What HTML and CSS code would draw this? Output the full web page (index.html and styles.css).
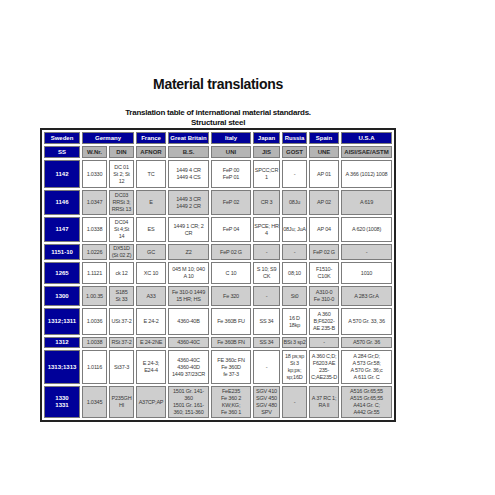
FILE: index.html
```html
<!DOCTYPE html>
<html>
<head>
<meta charset="utf-8">
<link rel="stylesheet" href="styles.css">
</head>
<body>
<div class="page">
  <h1 class="title">Material translations</h1>
  <p class="subtitle">Translation table of international material standards.<br>Structural steel</p>
  <table class="mat">
    <colgroup>
      <col class="c-se"><col class="c-wnr"><col class="c-din"><col class="c-fr"><col class="c-gb">
      <col class="c-it"><col class="c-jp"><col class="c-ru"><col class="c-es"><col class="c-us">
    </colgroup>
    <tr class="h1">
      <th>Sweden</th><th colspan="2">Germany</th><th>France</th><th>Great Britain</th><th>Italy</th><th>Japan</th><th>Russia</th><th>Spain</th><th>U.S.A</th>
    </tr>
    <tr class="h2">
      <th class="se">SS</th><th>W.Nr.</th><th>DIN</th><th>AFNOR</th><th>B.S.</th><th>UNI</th><th>JIS</th><th>GOST</th><th>UNE</th><th>AISI/SAE/ASTM</th>
    </tr>
    <tr class="w r1142">
      <th class="se">1142</th><td>1.0330</td><td>DC 01<br>St 2; St<br>12</td><td>TC</td><td>1449 4 CR<br>1449 4 CS</td><td>FeP 00<br>FeP 01</td><td>SPCC;CR<br>1</td><td>-</td><td>AP 01</td><td>A 366 (1012) 1008</td>
    </tr>
    <tr class="g r1146">
      <th class="se">1146</th><td>1.0347</td><td>DC03<br>RRSt 3;<br>RRSt 13</td><td>E</td><td>1449 3 CR<br>1449 2 CR</td><td>FeP 02</td><td>CR 3</td><td>08Ju</td><td>AP 02</td><td>A 619</td>
    </tr>
    <tr class="w r1147">
      <th class="se">1147</th><td>1.0338</td><td>DC04<br>St 4;St<br>14</td><td>ES</td><td>1449 1 CR; 2<br>CR</td><td>FeP 04</td><td>SPCE; HR<br>4</td><td>08Ju; JuA</td><td>AP 04</td><td>A 620 (1008)</td>
    </tr>
    <tr class="g r1151">
      <th class="se">1151-10</th><td>1.0226</td><td>DX51D<br>(St 02 Z)</td><td>GC</td><td>Z2</td><td>FeP 02 G</td><td>-</td><td>-</td><td>FeP 02 G</td><td>-</td>
    </tr>
    <tr class="w r1265">
      <th class="se">1265</th><td>1.1121</td><td>ck 12</td><td>XC 10</td><td>045 M 10; 040<br>A 10</td><td>C 10</td><td>S 10; S9<br>CK</td><td>08;10</td><td>F1510-<br>C10K</td><td>1010</td>
    </tr>
    <tr class="g r1300">
      <th class="se">1300</th><td>1.00.35</td><td>S185<br>St 33</td><td>A33</td><td>Fe 310-0 1449<br>15 HR; HS</td><td>Fe 320</td><td>-</td><td>St0</td><td>A310-0<br>Fe 310-0</td><td>A 283 Gr.A</td>
    </tr>
    <tr class="w r1311">
      <th class="se">1312;1311</th><td>1.0036</td><td>USt 37-2</td><td>E 24-2</td><td>4360-40B</td><td>Fe 360B FU</td><td>SS 34</td><td>16 D<br>18kp</td><td>A 360<br>B;F6202-<br>AE 235-B</td><td>A 570 Gr. 33, 36</td>
    </tr>
    <tr class="g r1312">
      <th class="se">1312</th><td>1.0038</td><td>RSt 37-2</td><td>E 24-2NE</td><td>4360-40C</td><td>Fe 360B FN</td><td>SS 34</td><td>BSt 3 sp2</td><td>-</td><td>A570 Gr. 36</td>
    </tr>
    <tr class="w r1313">
      <th class="se">1313;1313</th><td>1.0116</td><td>St37-3</td><td>E 24-3;<br>E24-4</td><td>4360-40C<br>4360-40D<br>1449 37/23CR</td><td>FE 360c FN<br>Fe 360D<br>fe 37-3</td><td>-</td><td>18 ps;sp<br>St 3<br>kp;ps;<br>sp;16D</td><td>A 360 C;D;<br>F6203 AE<br>235-<br>C;AE235-D</td><td>A 284 Gr;D;<br>A 573 Gr.58;<br>A 570 Gr. 36;c<br>A 611 Gr. C</td>
    </tr>
    <tr class="g r1330">
      <th class="se">1330<br>1331</th><td>1.0345</td><td>P235GH<br>HI</td><td>A37CP;AP</td><td>1501 Gr. 141-<br>360<br>1501 Gr. 161-<br>360; 151-360</td><td>FeE235<br>Fe 360 2<br>KW;KG;<br>Fe 360 1</td><td>SGV 410<br>SGV 450<br>SGV 480<br>SPV</td><td>-</td><td>A 37 RC 1;<br>RA II</td><td>A516 Gr.65;55<br>A515 Gr.65;55<br>A414 Gr. C;<br>A442 Gr.55</td>
    </tr>
  </table>
</div>
</body>
</html>
```
FILE: styles.css
```css
html, body {
  background: #ffffff;
}
body {
  margin: 8px;
  font-family: "Liberation Sans", Arial, sans-serif;
  color: #111;
}
.page {
  width: 420px;
  display: flex;
  flex-direction: column;
  align-items: center;
}
.title {
  margin: 68px 0 0;
  font-size: 14px;
  line-height: 16px;
  font-weight: bold;
  letter-spacing: -0.3px;
  color: #111;
  text-align: center;
}
.subtitle {
  margin: 16px 0 0;
  font-size: 8px;
  line-height: 10px;
  font-weight: bold;
  letter-spacing: -0.25px;
  text-align: center;
  color: #111;
}
.mat {
  width: 356px;
  table-layout: fixed;
  border: 2px solid #222;
  border-spacing: 2px;
  background: #ffffff;
}
.c-se { width: 36px; }
.c-wnr { width: 25px; }
.c-din { width: 25px; }
.c-fr { width: 30px; }
.c-gb { width: 41px; }
.c-it { width: 40px; }
.c-jp { width: 27px; }
.c-ru { width: 25px; }
.c-es { width: 30px; }
.c-us { width: 51px; }
.mat th, .mat td {
  border: 1px solid #7c7c7c;
  padding: 0;
  text-align: center;
  vertical-align: middle;
  white-space: nowrap;
  overflow: hidden;
  line-height: 7px;
}
.mat td {
  font-size: 5.5px;
  letter-spacing: -0.2px;
  color: #3a3a3a;
}
.mat th {
  font-size: 6px;
  font-weight: bold;
}
.h1 th {
  background: #000099;
  color: #ffffff;
  height: 10px;
}
.h2 th {
  background: #b4b4b4;
  color: #2a2a2a;
  height: 10px;
}
.mat th.se {
  background: #000099;
  color: #ffffff;
}
.w td { background: #ffffff; }
.g td { background: #cecece; }
.r1142 { height: 28px; }
.r1146 { height: 25px; }
.r1147 { height: 25px; }
.r1151 { height: 16px; }
.r1265 { height: 22px; }
.r1300 { height: 20px; }
.r1311 { height: 27px; }
.r1312 { height: 11px; }
.r1313 { height: 34px; }
.r1330 { height: 32px; }
```
